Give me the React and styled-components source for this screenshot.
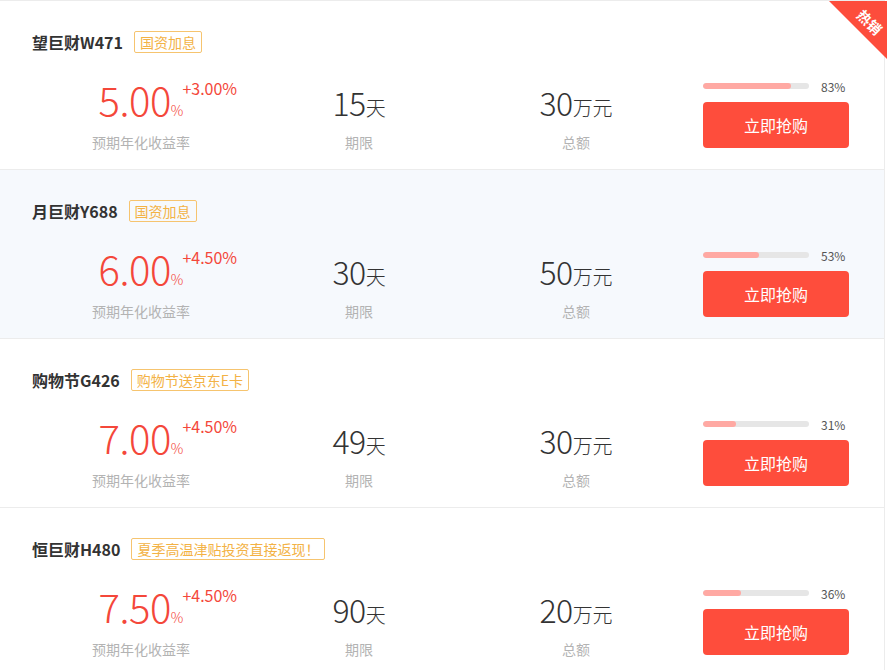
import React from 'react';
import styled, { createGlobalStyle } from 'styled-components';

const Global = createGlobalStyle`
  html, body { margin: 0; padding: 0; background: #fff; }
  body { font-family: "Noto Sans CJK SC", "Microsoft YaHei", sans-serif; }
`;

const List = styled.div`
  position: relative;
  width: 884px;
  border-top: 1px solid #ececec;
  border-right: 1px solid #ececec;
`;

const Ribbon = styled.div`
  position: absolute;
  top: 0;
  right: -3px;
  width: 58px;
  height: 58px;
  background: #fd4d3c;
  clip-path: polygon(0 0, 100% 0, 100% 100%);
`;

const RibbonText = styled.span`
  position: absolute;
  left: 27px;
  top: 11px;
  font-size: 14px;
  font-weight: bold;
  line-height: 20px;
  color: #fff;
  transform: rotate(45deg);
  white-space: nowrap;
`;

const Row = styled.div`
  height: 169px;
  box-sizing: border-box;
  border-bottom: 1px solid #ececec;
  background: ${p => (p.$active ? '#f6f9fd' : '#fff')};
  padding: 29px 0 0 32px;
`;

const Header = styled.div`
  display: flex;
  align-items: center;
  gap: 11px;
  height: 23px;
`;

const Title = styled.div`
  font-size: 16px;
  font-weight: bold;
  color: #333;
`;

const Tag = styled.span`
  border: 1px solid #f6c46f;
  color: #f3b245;
  font-size: 14px;
  line-height: 20px;
  padding: 0 5px;
  border-radius: 2px;
`;

const Body = styled.div`
  display: grid;
  grid-template-columns: 200px 236px 198px auto;
  align-items: start;
  margin: 24px 0 0 9px;
`;

const Col = styled.div`
  display: flex;
  flex-direction: column;
  align-items: center;
`;

const ValueLine = styled.div`
  position: relative;
  display: flex;
  align-items: baseline;
  box-sizing: border-box;
  height: 44px;
  padding-top: ${p => p.$shift || 0}px;
  line-height: 44px;
  color: ${p => (p.$red ? '#f4473a' : '#333')};
`;

const Big = styled.span`
  font-size: ${p => p.$size}px;
  font-weight: 300;
  letter-spacing: -0.5px;
`;

const Unit = styled.span`
  font-size: ${p => p.$size}px;
  font-weight: 300;
`;

const Bonus = styled.span`
  position: absolute;
  left: 100%;
  top: 1px;
  margin-left: -1px;
  font-size: 16px;
  line-height: 20px;
  color: #f4473a;
  white-space: nowrap;
`;

const Label = styled.div`
  margin-top: 12px;
  font-size: 14px;
  line-height: 18px;
  color: #b3b3b3;
`;

const Action = styled.div`
  margin: 9px 0 0 28px;
  display: flex;
  flex-direction: column;
`;

const ProgressRow = styled.div`
  display: flex;
  align-items: center;
  gap: 12px;
  height: 14px;
  margin-top: -7px;
`;

const Track = styled.div`
  width: 106px;
  height: 6px;
  border-radius: 3px;
  background: #e6e6e6;
  overflow: hidden;
`;

const Fill = styled.div`
  height: 100%;
  border-radius: 3px;
  background: #ffa9a3;
`;

const Percent = styled.span`
  font-size: 12px;
  color: #555;
`;

const BuyButton = styled.button`
  margin-top: 9px;
  width: 146px;
  height: 46px;
  border: none;
  border-radius: 4px;
  background: #fe4d3c;
  color: #fff;
  font-family: inherit;
  font-size: 16px;
  cursor: pointer;
`;

const items = [
  { name: '望巨财W471', tag: '国资加息', rate: '5.00', bonus: '+3.00%', days: '15', total: '30', pct: 83 },
  { name: '月巨财Y688', tag: '国资加息', rate: '6.00', bonus: '+4.50%', days: '30', total: '50', pct: 53, active: true },
  { name: '购物节G426', tag: '购物节送京东E卡', rate: '7.00', bonus: '+4.50%', days: '49', total: '30', pct: 31 },
  { name: '恒巨财H480', tag: '夏季高温津贴投资直接返现！', rate: '7.50', bonus: '+4.50%', days: '90', total: '20', pct: 36 },
];

export default function App() {
  return (
    <>
      <Global />
      <List>
        <Ribbon>
          <RibbonText>热销</RibbonText>
        </Ribbon>
        {items.map(it => (
          <Row key={it.name} $active={it.active}>
            <Header>
              <Title>{it.name}</Title>
              <Tag>{it.tag}</Tag>
            </Header>
            <Body>
              <Col>
                <ValueLine $red>
                  <Big $size={40}>{it.rate}</Big>
                  <Unit $size={14}>%</Unit>
                  <Bonus>{it.bonus}</Bonus>
                </ValueLine>
                <Label>预期年化收益率</Label>
              </Col>
              <Col>
                <ValueLine $shift={3}>
                  <Big $size={32}>{it.days}</Big>
                  <Unit $size={20}>天</Unit>
                </ValueLine>
                <Label>期限</Label>
              </Col>
              <Col>
                <ValueLine $shift={3}>
                  <Big $size={32}>{it.total}</Big>
                  <Unit $size={20}>万元</Unit>
                </ValueLine>
                <Label>总额</Label>
              </Col>
              <Action>
                <ProgressRow>
                  <Track>
                    <Fill style={{ width: `${it.pct}%` }} />
                  </Track>
                  <Percent>{it.pct}%</Percent>
                </ProgressRow>
                <BuyButton>立即抢购</BuyButton>
              </Action>
            </Body>
          </Row>
        ))}
      </List>
    </>
  );
}
